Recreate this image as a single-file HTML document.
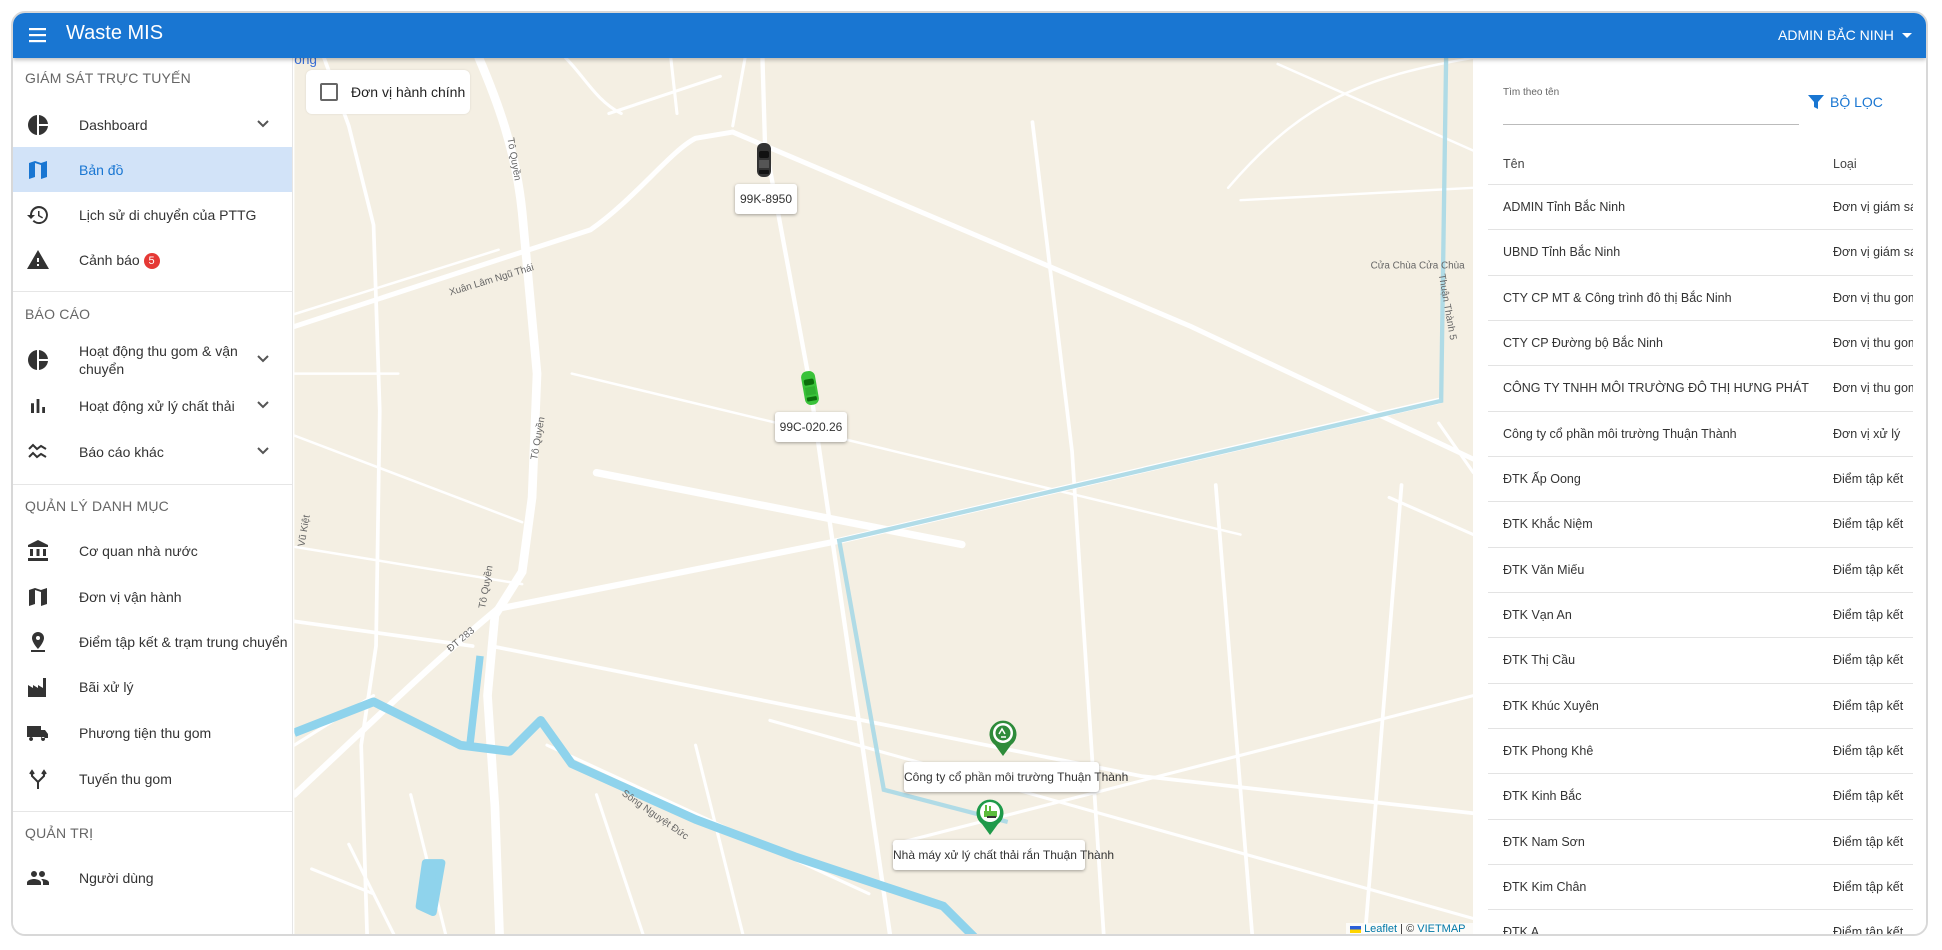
<!DOCTYPE html>
<html><head><meta charset="utf-8">
<style>
*{box-sizing:border-box;margin:0;padding:0}
body{width:1942px;height:950px;background:#fff;font-family:"Liberation Sans",Arial,sans-serif;position:relative;overflow:hidden;color:#333}
.frame{position:absolute;left:11px;top:11px;width:1917px;height:925px;border:2px solid #d8d8d8;border-radius:14px;overflow:hidden;background:#fff}
.hdr{position:absolute;left:0;top:0;right:0;height:45px;background:#1976d2;color:#fff;box-shadow:0 2px 4px rgba(0,0,0,.25);z-index:5}
.side{position:absolute;left:0;top:45px;width:280px;bottom:0;background:#fff;border-right:1px solid #e6e6e6}
.sh{position:absolute;left:12px;font-size:14px;color:#666;letter-spacing:.2px}
.it{position:absolute;left:0;width:279px;height:45px;font-size:14px;color:#333}
.it .ic{position:absolute;left:13px;top:11px;width:24px;height:24px}
.it .tx{position:absolute;left:66px;top:50%;transform:translateY(-50%);line-height:18px}
.it .cv{position:absolute;left:243px;top:13px}
.div{position:absolute;left:0;width:279px;height:1px;background:#e6e6e6}
.right{position:absolute;left:1460px;top:45px;width:455px;bottom:0;background:#fff}
.row{position:absolute;left:15px;width:425px;height:45px;border-top:1px solid #e3e3e3;font-size:12.5px;color:#333;overflow:hidden;white-space:nowrap}
.row span{position:absolute;top:15px}
.row .a{left:15px}.row .b{left:345px}
.lbl{position:absolute;background:#fff;border-radius:3px;box-shadow:0 1px 3px rgba(0,0,0,.35);font-size:12px;color:#333;text-align:center;white-space:nowrap}
</style></head><body>
<div class="frame">
 <div class="hdr">
  <svg style="position:absolute;left:15px;top:13px" width="20" height="18" viewBox="0 0 20 18"><rect x="1" y="2" width="17" height="2.2" fill="#fff"/><rect x="1" y="8" width="17" height="2.2" fill="#fff"/><rect x="1" y="14" width="17" height="2.2" fill="#fff"/></svg>
  <div style="position:absolute;left:53px;top:9px;font-size:20px">Waste MIS</div>
  <div style="position:absolute;left:1765px;top:14px;font-size:14px">ADMIN BẮC NINH</div>
  <svg style="position:absolute;left:1888px;top:19px" width="12" height="8"><path d="M1 1h10L6 6z" fill="#fff"/></svg>
 </div>

 <!-- MAP -->
 <svg style="position:absolute;left:-11px;top:-11px" width="1942" height="950" viewBox="0 0 1568 767">
  <defs><clipPath id="c"><rect x="236" y="45" width="952" height="710"/></clipPath></defs>
  <g clip-path="url(#c)">
   <rect x="236" y="45" width="952" height="710" fill="#f4efe3"/>
   <g fill="none" stroke="#fff" stroke-linecap="round">
    <path d="M385,45 C400,80 415,120 420,170 L432,300 L428,400 L420,460 L398,495 L392,560 L398,650 L402,760" stroke-width="7"/>
    <path d="M236,262 L401,208 L475,184 C510,160 540,120 560,110 L590,105" stroke-width="4"/>
    <path d="M236,252 L401,200" stroke-width="2"/>
    <path d="M590,105 L960,262 L1190,370" stroke-width="4"/>
    <path d="M614,45 L616,113 L652,307 L666,404 L718,760" stroke-width="3.5"/>
    <path d="M480,380 L775,438" stroke-width="6"/>
    <path d="M236,640 C290,590 340,540 400,490 L676,435 L1160,322" stroke-width="5"/>
    <path d="M395,520 L920,625 L1188,655" stroke-width="3"/>
    <path d="M832,97 L864,363 L890,760" stroke-width="3"/>
    <path d="M236,500 L380,520" stroke-width="3"/>
    <path d="M237,440 L420,470 M236,300 L320,300 M236,350 L420,420 M460,300 L1000,430" stroke-width="2"/>
    <path d="M980,390 L1010,760 M1130,390 L1100,760" stroke-width="3"/>
    <path d="M260,45 L280,100 L300,180 L305,330 L302,520 L290,600 L295,760" stroke-width="3"/>
    <path d="M455,45 C470,60 480,80 500,90 M490,90 L580,60 M540,45 L545,90 M600,45 L590,100" stroke-width="2.5"/>
    <path d="M1188,45 C1100,60 1050,80 990,150 M1030,50 L1188,120 M1000,160 L1188,150" stroke-width="2"/>
    <path d="M620,580 L1188,740 M720,680 L1188,560 M560,600 L600,760 M480,640 L520,760 M440,600 L700,720" stroke-width="2.5"/>
    <path d="M1160,340 L1188,380 M1120,400 L1188,430" stroke-width="2.5"/>
    <path d="M300,560 L236,600 M330,640 L360,760 M280,680 L320,760 M250,700 L300,720" stroke-width="2.5"/>
   </g>
   <g fill="none" stroke="#8fd3ec" stroke-linejoin="round">
    <path d="M236,590 L300,565 L370,600 L410,605 L435,580 L460,615 L560,660 L640,690 L760,730 L790,760" stroke-width="7"/>
    <path d="M386,528 L378,598" stroke-width="6"/>
    <path d="M337,730 L342,695 L355,695 L348,735 Z" stroke-width="6" fill="#8fd3ec"/>
   </g>
   <path d="M1166,45 L1162,322 L676,435 L712,636 L812,662" fill="none" stroke="#a9d8e6" stroke-width="3.5" opacity=".9"/>
   <g font-family="Liberation Sans,Arial,sans-serif" font-size="8" fill="#666">
    <text transform="translate(408,110) rotate(80)">Tô Quyền</text>
    <text transform="translate(432,370) rotate(-80)">Tô Quyền</text>
    <text transform="translate(390,490) rotate(-80)">Tô Quyền</text>
    <text transform="translate(362,237) rotate(-17)">Xuân Lâm Ngũ Thái</text>
    <text transform="translate(362,525) rotate(-40)">ĐT 283</text>
    <text transform="translate(500,640) rotate(35)">Sông Nguyệt Đức</text>
    <text x="1105" y="215">Cửa Chùa  Cửa Chùa</text>
    <text transform="translate(1160,220) rotate(80)">Thuận Thành 5</text>
    <text transform="translate(244,440) rotate(-80)">Vũ Kiệt</text>
   </g>
   <text x="236" y="50" font-family="Liberation Sans,Arial,sans-serif" font-size="11" fill="#3a6fd8">ông</text>
  </g>
 </svg>

 <div style="position:absolute;left:293px;top:57px;width:164px;height:44px;background:#fff;border-radius:6px;box-shadow:0 0 2px rgba(0,0,0,.1)">
  <div style="position:absolute;left:14px;top:13px;width:18px;height:18px;border:2px solid #666;border-radius:2px"></div>
  <div style="position:absolute;left:45px;top:14px;font-size:14px;color:#222">Đơn vị hành chính</div>
 </div>

 <svg style="position:absolute;left:742px;top:129px" width="18" height="36" viewBox="0 0 18 36"><rect x="2" y="1" width="14" height="34" rx="6" fill="#333"/><rect x="4" y="9" width="10" height="7" rx="2" fill="#111"/><rect x="4" y="18" width="10" height="8" fill="#555"/><rect x="4" y="28" width="10" height="4" rx="1" fill="#111"/></svg>
 <div class="lbl" style="left:722px;top:171px;width:62px;height:30px;line-height:30px">99K-8950</div>
 <svg style="position:absolute;left:787px;top:357px" width="20" height="36" viewBox="0 0 20 36"><g transform="rotate(-10 10 18)"><rect x="3" y="1" width="14" height="34" rx="6" fill="#3ac23a"/><rect x="5" y="9" width="10" height="6" rx="2" fill="#0b6e0b"/><rect x="5" y="17" width="10" height="8" fill="#30b030"/><rect x="5" y="27" width="10" height="4" rx="1" fill="#0b6e0b"/></g></svg>
 <div class="lbl" style="left:762px;top:399px;width:72px;height:30px;line-height:30px">99C-020.26</div>

 <svg style="position:absolute;left:975px;top:705px" width="30" height="40" viewBox="0 0 30 40"><path d="M15 38 L7 27 A13.5 13.5 0 1 1 23 27 Z" fill="#2e8b3a"/><circle cx="15" cy="15" r="10" fill="#fff"/><circle cx="15" cy="15" r="7.5" fill="#2e8b3a"/><path d="M11 16 l3-5 3 5 M13 19h5" stroke="#fff" stroke-width="1.5" fill="none"/></svg>
 <div class="lbl" style="left:891px;top:749px;width:195px;height:30px;line-height:30px">Công ty cổ phần môi trường Thuận Thành</div>
 <svg style="position:absolute;left:962px;top:784px" width="30" height="40" viewBox="0 0 30 40"><path d="M15 38 L7 27 A13.5 13.5 0 1 1 23 27 Z" fill="#1f9a4a"/><circle cx="15" cy="15" r="10" fill="#fff"/><rect x="9" y="14" width="13" height="6" fill="#5cbc3c"/><rect x="10" y="8" width="2" height="7" fill="#5cbc3c"/><rect x="14" y="9" width="2" height="6" fill="#5cbc3c"/><rect x="12" y="19" width="9" height="2" fill="#333"/></svg>
 <div class="lbl" style="left:880px;top:827px;width:192px;height:30px;line-height:30px">Nhà máy xử lý chất thải rắn Thuận Thành</div>
 <div style="position:absolute;left:1333px;top:910px;width:127px;height:13px;background:rgba(255,255,255,.75);font-size:11px;color:#333;line-height:13px;padding-left:4px"><span style="display:inline-block;width:11px;height:7px;background:linear-gradient(#2b5fd8 50%,#ffd500 50%);vertical-align:middle"></span> <span style="color:#0078a8">Leaflet</span> | © <span style="color:#0078a8">VIETMAP</span></div>

 <div class="side">
  <div class="sh" style="top:12px">GIÁM SÁT TRỰC TUYẾN</div>
  <div class="it" style="top:44px"><svg class="ic" viewBox="0 0 24 24"><path d="M11 2v20C6 21.5 2 17.2 2 12S6 2.5 11 2zm2 0v9h9c-.5-4.7-4.3-8.5-9-9zm0 11v9c4.7-.5 8.5-4.3 9-9z" fill="#333"/></svg><span class="tx">Dashboard</span><svg class="cv" width="14" height="18" viewBox="0 0 14 18"><path d="M2 6l5 5 5-5" stroke="#555" stroke-width="2" fill="none"/></svg></div>
  <div class="it" style="top:89px;background:#d2e3f8;color:#1976d2"><svg class="ic" viewBox="0 0 24 24"><path d="M3 5l6-2 6 2 6-2v16l-6 2-6-2-6 2zM9 5v14l6 2V7z" fill="#1976d2"/></svg><span class="tx">Bản đồ</span></div>
  <div class="it" style="top:134px"><svg class="ic" viewBox="0 0 24 24"><path d="M13 3a9 9 0 0 0-9 9H1l4 4 4-4H6a7 7 0 1 1 2 5l-1.4 1.4A9 9 0 1 0 13 3zm-1 5v5l4.3 2.5.7-1.2-3.5-2.1V8z" fill="#333"/></svg><span class="tx">Lịch sử di chuyển của PTTG</span></div>
  <div class="it" style="top:179px"><svg class="ic" viewBox="0 0 24 24"><path d="M1 21h22L12 2zm12-3h-2v-2h2zm0-4h-2v-4h2z" fill="#333"/></svg><span class="tx">Cảnh báo <span style="display:inline-block;width:16px;height:16px;border-radius:8px;background:#e53935;color:#fff;font-size:11px;line-height:16px;text-align:center;vertical-align:1px">5</span></span></div>
  <div class="div" style="top:233px"></div>
  <div class="sh" style="top:248px">BÁO CÁO</div>
  <div class="it" style="top:279px"><svg class="ic" viewBox="0 0 24 24"><path d="M11 2v20C6 21.5 2 17.2 2 12S6 2.5 11 2zm2 0v9h9c-.5-4.7-4.3-8.5-9-9zm0 11v9c4.7-.5 8.5-4.3 9-9z" fill="#333"/></svg><span class="tx">Hoạt động thu gom &amp; vận<br>chuyển</span><svg class="cv" width="14" height="18" viewBox="0 0 14 18"><path d="M2 6l5 5 5-5" stroke="#555" stroke-width="2" fill="none"/></svg></div>
  <div class="it" style="top:325px"><svg class="ic" viewBox="0 0 24 24"><path d="M5 9.2h3V19H5zM10.6 5h2.8v14h-2.8zm5.6 8H19v6h-2.8z" fill="#333"/></svg><span class="tx">Hoạt động xử lý chất thải</span><svg class="cv" width="14" height="18" viewBox="0 0 14 18"><path d="M2 6l5 5 5-5" stroke="#555" stroke-width="2" fill="none"/></svg></div>
  <div class="it" style="top:371px"><svg class="ic" viewBox="0 0 24 24"><path d="M3 9l4-4 4 4 4-3 5 3M3 17l4-4 4 4 4-3 5 3" stroke="#333" stroke-width="2" fill="none"/></svg><span class="tx">Báo cáo khác</span><svg class="cv" width="14" height="18" viewBox="0 0 14 18"><path d="M2 6l5 5 5-5" stroke="#555" stroke-width="2" fill="none"/></svg></div>
  <div class="div" style="top:426px"></div>
  <div class="sh" style="top:440px">QUẢN LÝ DANH MỤC</div>
  <div class="it" style="top:470px"><svg class="ic" viewBox="0 0 24 24"><path d="M4 10h3v7H4zm6.5 0h3v7h-3zM2 19h20v3H2zm15-9h3v7h-3zm-5-9L2 6v2h20V6z" fill="#333"/></svg><span class="tx">Cơ quan nhà nước</span></div>
  <div class="it" style="top:516px"><svg class="ic" viewBox="0 0 24 24"><path d="M3 5l6-2 6 2 6-2v16l-6 2-6-2-6 2zM9 5v14l6 2V7z" fill="#333"/></svg><span class="tx">Đơn vị vận hành</span></div>
  <div class="it" style="top:561px"><svg class="ic" viewBox="0 0 24 24"><path d="M12 2a6 6 0 0 0-6 6c0 4.5 6 11 6 11s6-6.5 6-11a6 6 0 0 0-6-6zm0 8a2 2 0 1 1 0-4 2 2 0 0 1 0 4zM5 20h14v2H5z" fill="#333"/></svg><span class="tx">Điểm tập kết &amp; trạm trung chuyển</span></div>
  <div class="it" style="top:606px"><svg class="ic" viewBox="0 0 24 24"><path d="M2 22V10l5 3V10l5 3V10l5 3V3h3v19zm4-5h2v2H6zm4 0h2v2h-2zm4 0h2v2h-2z" fill="#333"/></svg><span class="tx">Bãi xử lý</span></div>
  <div class="it" style="top:652px"><svg class="ic" viewBox="0 0 24 24"><path d="M1 5h14v11H1zM15 9h4l3 4v4h-7zM5 16a2 2 0 1 0 .1 0zm12 0a2 2 0 1 0 .1 0z" fill="#333"/></svg><span class="tx">Phương tiện thu gom</span></div>
  <div class="it" style="top:698px"><svg class="ic" viewBox="0 0 24 24"><path d="M12 22v-7L6 9V6M12 15l6-6V6M4 7l2-3 2 3M16 7l2-3 2 3" stroke="#333" stroke-width="2" fill="none"/></svg><span class="tx">Tuyến thu gom</span></div>
  <div class="div" style="top:753px"></div>
  <div class="sh" style="top:767px">QUẢN TRỊ</div>
  <div class="it" style="top:797px"><svg class="ic" viewBox="0 0 24 24"><path d="M16 11a3 3 0 1 0 0-6 3 3 0 0 0 0 6zm-8 0a3 3 0 1 0 0-6 3 3 0 0 0 0 6zm0 2c-2.3 0-7 1.2-7 3.5V19h14v-2.5C15 14.2 10.3 13 8 13zm8 0h-1c1.2.8 2 2 2 3.5V19h6v-2.5c0-2.3-4.7-3.5-7-3.5z" fill="#333"/></svg><span class="tx">Người dùng</span></div>
 </div>

 <div class="right">
  <div style="position:absolute;left:30px;top:29px;font-size:10px;color:#666">Tìm theo tên</div>
  <div style="position:absolute;left:30px;top:66px;width:296px;height:1px;background:#bbb"></div>
  <svg style="position:absolute;left:334px;top:35px" width="18" height="18" viewBox="0 0 18 18"><path d="M1 2h16l-6 7v7l-4-2V9z" fill="#1976d2"/></svg>
  <div style="position:absolute;left:357px;top:36px;font-size:14px;color:#1976d2">BỘ LỌC</div>
  <div style="position:absolute;left:30px;top:99px;font-size:12.5px;color:#444">Tên</div>
  <div style="position:absolute;left:360px;top:99px;font-size:12.5px;color:#444">Loại</div>
  <div class="row" style="top:126px"><span class="a">ADMIN Tỉnh Bắc Ninh</span><span class="b">Đơn vị giám sát</span></div>
  <div class="row" style="top:171px"><span class="a">UBND Tỉnh Bắc Ninh</span><span class="b">Đơn vị giám sát</span></div>
  <div class="row" style="top:217px"><span class="a">CTY CP MT &amp; Công trình đô thị Bắc Ninh</span><span class="b">Đơn vị thu gom</span></div>
  <div class="row" style="top:262px"><span class="a">CTY CP Đường bộ Bắc Ninh</span><span class="b">Đơn vị thu gom</span></div>
  <div class="row" style="top:307px"><span class="a">CÔNG TY TNHH MÔI TRƯỜNG ĐÔ THỊ HƯNG PHÁT</span><span class="b">Đơn vị thu gom</span></div>
  <div class="row" style="top:353px"><span class="a">Công ty cổ phần môi trường Thuận Thành</span><span class="b">Đơn vị xử lý</span></div>
  <div class="row" style="top:398px"><span class="a">ĐTK Ấp Oong</span><span class="b">Điểm tập kết</span></div>
  <div class="row" style="top:443px"><span class="a">ĐTK Khắc Niệm</span><span class="b">Điểm tập kết</span></div>
  <div class="row" style="top:489px"><span class="a">ĐTK Văn Miếu</span><span class="b">Điểm tập kết</span></div>
  <div class="row" style="top:534px"><span class="a">ĐTK Vạn An</span><span class="b">Điểm tập kết</span></div>
  <div class="row" style="top:579px"><span class="a">ĐTK Thị Cầu</span><span class="b">Điểm tập kết</span></div>
  <div class="row" style="top:625px"><span class="a">ĐTK Khúc Xuyên</span><span class="b">Điểm tập kết</span></div>
  <div class="row" style="top:670px"><span class="a">ĐTK Phong Khê</span><span class="b">Điểm tập kết</span></div>
  <div class="row" style="top:715px"><span class="a">ĐTK Kinh Bắc</span><span class="b">Điểm tập kết</span></div>
  <div class="row" style="top:761px"><span class="a">ĐTK Nam Sơn</span><span class="b">Điểm tập kết</span></div>
  <div class="row" style="top:806px"><span class="a">ĐTK Kim Chân</span><span class="b">Điểm tập kết</span></div>
  <div class="row" style="top:851px"><span class="a">ĐTK A</span><span class="b">Điểm tập kết</span></div>
 </div>
</div>
</body></html>
